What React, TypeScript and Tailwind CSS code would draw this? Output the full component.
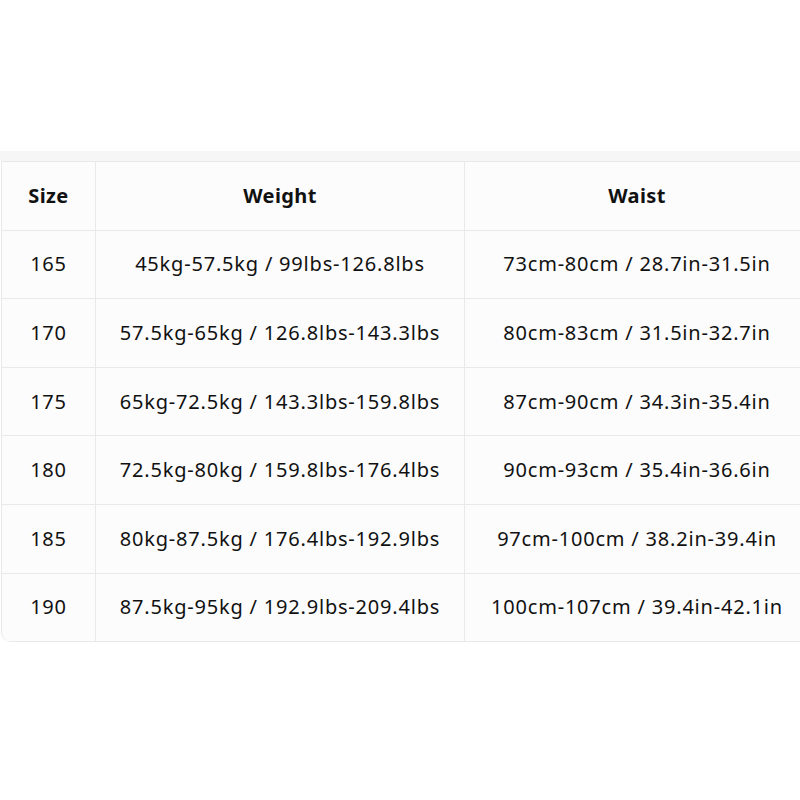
import React from 'react'

const rows = [
  ['165', '45kg-57.5kg / 99lbs-126.8lbs', '73cm-80cm / 28.7in-31.5in'],
  ['170', '57.5kg-65kg / 126.8lbs-143.3lbs', '80cm-83cm / 31.5in-32.7in'],
  ['175', '65kg-72.5kg / 143.3lbs-159.8lbs', '87cm-90cm / 34.3in-35.4in'],
  ['180', '72.5kg-80kg / 159.8lbs-176.4lbs', '90cm-93cm / 35.4in-36.6in'],
  ['185', '80kg-87.5kg / 176.4lbs-192.9lbs', '97cm-100cm / 38.2in-39.4in'],
  ['190', '87.5kg-95kg / 192.9lbs-209.4lbs', '100cm-107cm / 39.4in-42.1in'],
]

const cell = 'h-[68.6px] flex items-center justify-center border-r border-b border-[#e9e9e9]'

const App = () => {
  return (
    <div className="w-[800px] h-[800px] bg-white overflow-hidden pt-[151px] font-['Noto_Sans','Open_Sans',sans-serif] text-[#111]">
      <div className="w-[810px] h-[10px] bg-[#f6f6f6]" />
      <div className="ml-px w-[808px] grid grid-cols-[94px_369px_345px] bg-[#fcfcfc] border-l border-t border-[#e9e9e9] rounded-bl-[10px] overflow-hidden">
        <div className={`${cell} text-[20px] font-bold tracking-[0.02em]`}>Size</div>
        <div className={`${cell} text-[20px] font-bold tracking-[0.02em]`}>Weight</div>
        <div className={`${cell} text-[20px] font-bold tracking-[0.02em]`}>Waist</div>
        {rows.map((r) => (
          <React.Fragment key={r[0]}>
            <div className={`${cell} text-[20px] tracking-[0.04em]`}>{r[0]}</div>
            <div className={`${cell} text-[20px] tracking-[0.04em]`}>{r[1]}</div>
            <div className={`${cell} text-[20px] tracking-[0.04em]`}>{r[2]}</div>
          </React.Fragment>
        ))}
      </div>
    </div>
  )
}

export default App
